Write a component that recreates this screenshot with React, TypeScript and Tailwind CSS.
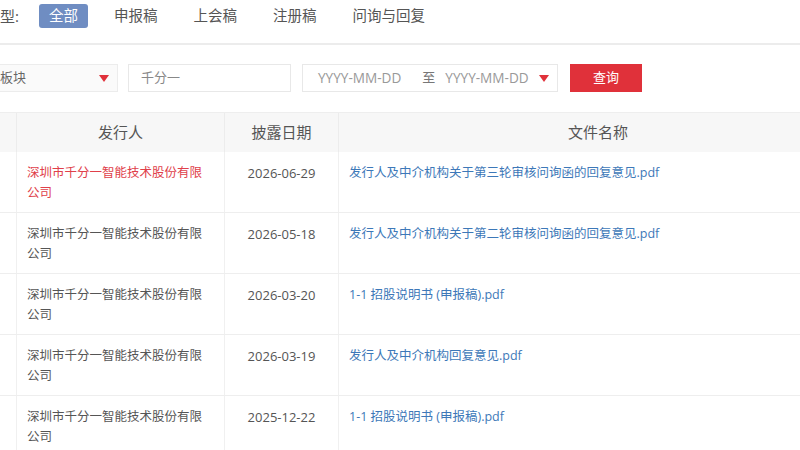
import React from 'react';

const tabs = ['全部', '申报稿', '上会稿', '注册稿', '问询与回复'];

const rows = [
  { issuer: '深圳市千分一智能技术股份有限公司', date: '2026-06-29', file: '发行人及中介机构关于第三轮审核问询函的回复意见.pdf', hot: true },
  { issuer: '深圳市千分一智能技术股份有限公司', date: '2026-05-18', file: '发行人及中介机构关于第二轮审核问询函的回复意见.pdf' },
  { issuer: '深圳市千分一智能技术股份有限公司', date: '2026-03-20', file: '1-1 招股说明书 (申报稿).pdf' },
  { issuer: '深圳市千分一智能技术股份有限公司', date: '2026-03-19', file: '发行人及中介机构回复意见.pdf' },
  { issuer: '深圳市千分一智能技术股份有限公司', date: '2025-12-22', file: '1-1 招股说明书 (申报稿).pdf' },
];

function Caret() {
  return (
    <svg width="10" height="7" viewBox="0 0 10 7" className="shrink-0">
      <path d="M0 0 H10 L5 7 Z" fill="#e0313a" />
    </svg>
  );
}

export default function App() {
  return (
    <div
      className="w-[800px] h-[450px] overflow-hidden bg-white text-[#555]"
      style={{ fontFamily: '"Open Sans", "Noto Sans CJK SC", sans-serif' }}
    >
      {/* Type tabs */}
      <div className="h-[43px] flex items-start -ml-[15px] pt-[4px]">
        <span className="h-[24px] flex items-center text-[15px] text-[#555] mr-[20px]">类型:</span>
        <div className="flex items-center gap-[16px]">
          {tabs.map((t, i) => (
            <span
              key={t}
              className={
                i === 0
                  ? 'h-[24px] px-[10px] flex items-center rounded-[3px] bg-[#6f8dc2] text-white text-[14.5px]'
                  : 'h-[24px] px-[10px] flex items-center text-[14.5px] text-[#555]'
              }
            >
              {t}
            </span>
          ))}
        </div>
      </div>
      <div className="h-[2px] bg-[#ececec]" />

      {/* Filters */}
      <div className="flex items-center mt-[19px] h-[28px] text-[13px]">
        <div className="w-[118px] h-[28px] flex items-center justify-between pr-[8px] bg-[#fafafa] border border-[#ececec] border-l-0 text-[#666]">
          <span>板块</span>
          <Caret />
        </div>
        <div className="ml-[10px] w-[163px] h-[28px] flex items-center px-[12px] border border-[#e8e8e8] text-[#888]">
          千分一
        </div>
        <div className="ml-[11px] w-[256px] h-[28px] flex items-center pl-[15px] pr-[8px] border border-[#e8e8e8] text-[#999] text-[13.6px]">
          <span>YYYY-MM-DD</span>
          <span className="ml-[21px] text-[#777] text-[13px]">至</span>
          <span className="ml-[10px]">YYYY-MM-DD</span>
          <span className="ml-auto">
            <Caret />
          </span>
        </div>
        <button className="ml-[12px] w-[72px] h-[28px] bg-[#e0313a] text-white text-[13px] flex items-center justify-center">
          查询
        </button>
      </div>

      {/* Table */}
      <div className="mt-[20px] border-t border-[#eeeeee] w-[900px]">
        <div className="flex h-[39px] bg-[#f7f7f7] text-[15px] text-[#555]">
          <div className="w-[17px] border-r border-[#ececec]" />
          <div className="w-[208px] border-r border-[#ececec] flex items-center justify-center">发行人</div>
          <div className="w-[114px] border-r border-[#ececec] flex items-center justify-center">披露日期</div>
          <div className="w-[518px] flex items-center justify-center">文件名称</div>
        </div>
        {rows.map((r, i) => (
          <div key={i} className="flex h-[61px] border-b border-[#eeeeee] text-[12.5px] leading-[20px]">
            <div className="w-[17px] border-r border-[#f0f0f0]" />
            <div
              className={
                r.hot
                  ? 'w-[208px] border-r border-[#f0f0f0] px-[10px] pt-[11px] text-[#e0404a]'
                  : 'w-[208px] border-r border-[#f0f0f0] px-[10px] pt-[11px] text-[#555]'
              }
            >
              {r.issuer}
            </div>
            <div className="w-[114px] border-r border-[#f0f0f0] pt-[11px] text-center text-[#555] text-[13px]">{r.date}</div>
            <div className="flex-1 px-[10px] pt-[11px] text-[#3d78b8]">{r.file}</div>
          </div>
        ))}
      </div>
    </div>
  );
}
